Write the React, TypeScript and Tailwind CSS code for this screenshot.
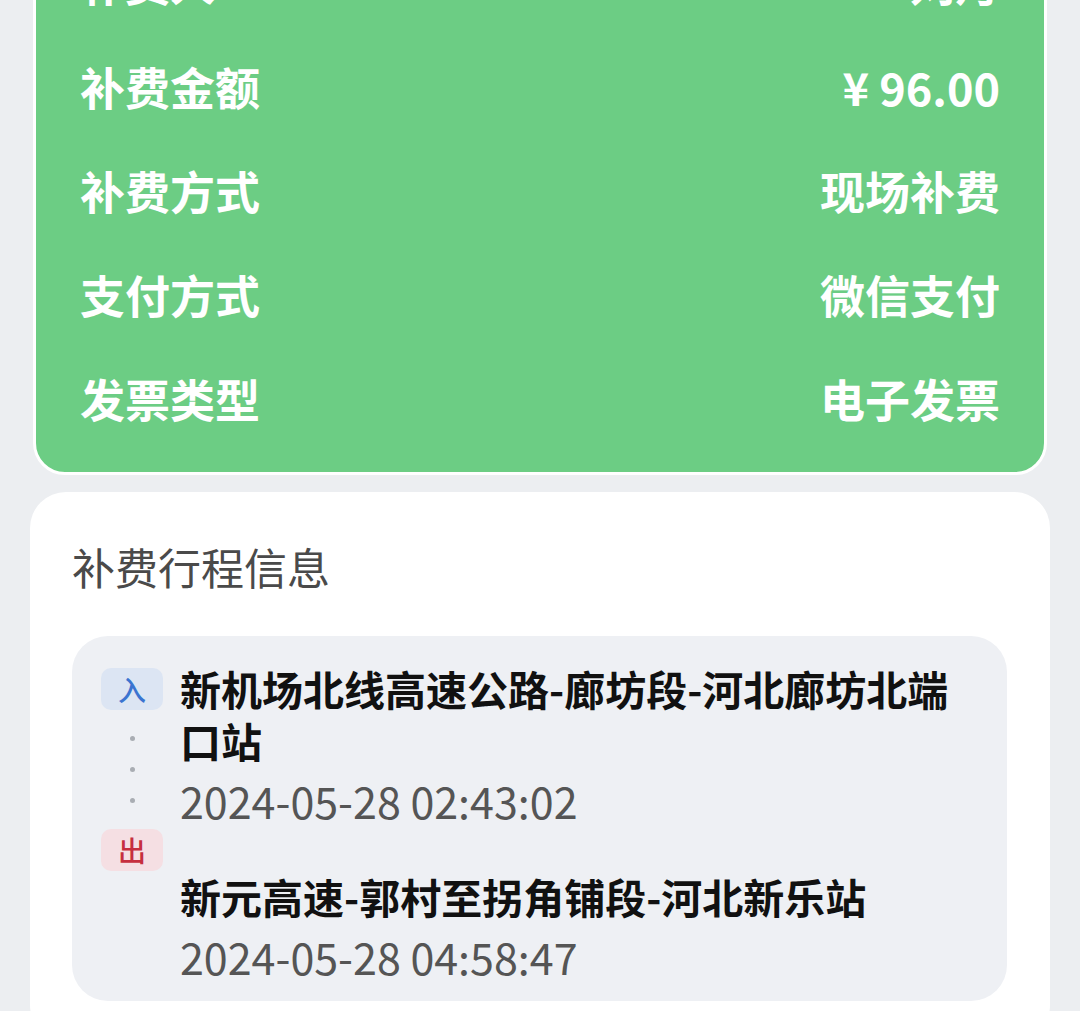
const font = { fontFamily: '"Noto Sans CJK SC", "Noto Sans", sans-serif' };

const rows = [
  { label: '补费人', value: '刘丹' },
  { label: '补费金额', value: '¥ 96.00' },
  { label: '补费方式', value: '现场补费' },
  { label: '支付方式', value: '微信支付' },
  { label: '发票类型', value: '电子发票' },
];

function Dot() {
  return <div className="h-[5px] w-[5px] rounded-full bg-[#a9adb3]" />;
}

export default function App() {
  return (
    <div className="h-[1011px] overflow-hidden bg-[#eceef1] px-[30px]" style={font}>
      {/* summary card */}
      <div className="mx-[3px] -mt-[89px] rounded-[32px] border-[3px] border-white bg-[#6ccd84] px-[44px] pb-[21px] pt-[17px]">
        {rows.map((r) => (
          <div key={r.label} className="flex h-[104px] items-center justify-between text-[45px] font-bold text-white">
            <span>{r.label}</span>
            <span>{r.value}</span>
          </div>
        ))}
      </div>

      {/* trip info */}
      <div className="mt-[17px] rounded-[36px] bg-white pb-[40px] pl-[42px] pr-[43px] pt-[50px]">
        <div className="h-[48px] text-[43px] leading-[48px] text-[#4a4a4a]">补费行程信息</div>
        <div className="mt-[46px] flex rounded-[36px] bg-[#eef0f4] pb-[19px] pl-[29px] pr-[30px] pt-[26px]">
          <div className="flex w-[62px] shrink-0 flex-col items-center pt-[6px]">
            <div className="flex h-[42px] w-[62px] items-center justify-center rounded-[10px] bg-[#dce5f3] text-[28px] font-medium text-[#3b74d0]">
              入
            </div>
            <div className="mt-[26px] flex flex-col items-center gap-[26px]">
              <Dot />
              <Dot />
              <Dot />
            </div>
            <div className="mt-[26px] flex h-[42px] w-[62px] items-center justify-center rounded-[10px] bg-[#f5dfe3] text-[28px] font-medium text-[#c62f3f]">
              出
            </div>
          </div>
          <div className="ml-[17px] flex-1">
            <div className="text-[41px] font-bold leading-[52px] text-[#111]">新机场北线高速公路-廊坊段-河北廊坊北端口站</div>
            <div className="mt-[8px] text-[43px] leading-[52px] text-[#555]">2024-05-28 02:43:02</div>
            <div className="mt-[44px] text-[41px] font-bold leading-[52px] text-[#111]">新元高速-郭村至拐角铺段-河北新乐站</div>
            <div className="mt-[8px] text-[43px] leading-[52px] text-[#555]">2024-05-28 04:58:47</div>
          </div>
        </div>
      </div>
    </div>
  );
}
